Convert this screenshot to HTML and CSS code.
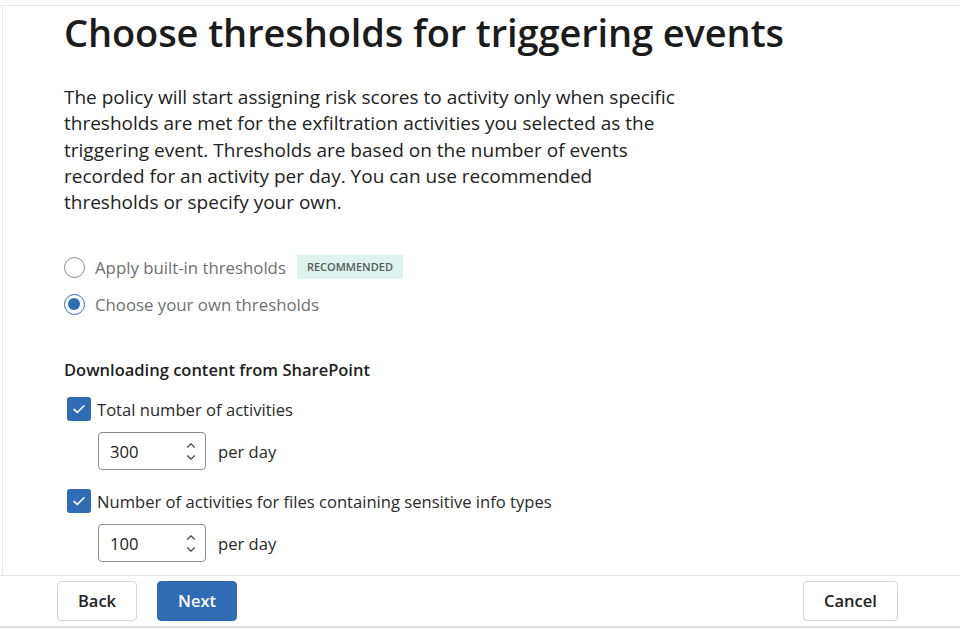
FILE: index.html
```html
<!DOCTYPE html>
<html lang="en">
<head>
<meta charset="utf-8">
<title>Choose thresholds for triggering events</title>
<link rel="stylesheet" href="styles.css">
</head>
<body>
<div class="page">
  <div class="top-gap"></div>
  <main class="content">
    <h1 class="title">Choose thresholds for triggering events</h1>
    <p class="intro">The policy will start assigning risk scores to activity only when specific thresholds are met for the exfiltration activities you selected as the triggering event. Thresholds are based on the number of events recorded for an activity per day. You can use recommended thresholds or specify your own.</p>

    <div class="radios">
      <label class="radio-row">
        <span class="radio"></span>
        <span class="radio-label muted">Apply built-in thresholds</span>
        <span class="badge">RECOMMENDED</span>
      </label>
      <label class="radio-row">
        <span class="radio checked"></span>
        <span class="radio-label muted">Choose your own thresholds</span>
      </label>
    </div>

    <h2 class="section-title">Downloading content from SharePoint</h2>

    <div class="check-row">
      <span class="checkbox"><svg width="16" height="16" viewBox="0 0 16 16"><path d="M3 8.3 L6.3 11.4 L13 4.8" fill="none" stroke="#fff" stroke-width="1.6" stroke-linecap="round" stroke-linejoin="round"/></svg></span>
      <span class="check-label">Total number of activities</span>
    </div>
    <div class="spin-row">
      <div class="spin">
        <span class="spin-value">300</span>
        <span class="spin-arrows">
          <svg width="10" height="7" viewBox="0 0 10 7"><path d="M1.5 5.2 L5 1.8 L8.5 5.2" fill="none" stroke="#444" stroke-width="1.2" stroke-linecap="round"/></svg>
          <svg width="10" height="7" viewBox="0 0 10 7"><path d="M1.5 1.8 L5 5.2 L8.5 1.8" fill="none" stroke="#444" stroke-width="1.2" stroke-linecap="round"/></svg>
        </span>
      </div>
      <span class="unit">per day</span>
    </div>

    <div class="check-row">
      <span class="checkbox"><svg width="16" height="16" viewBox="0 0 16 16"><path d="M3 8.3 L6.3 11.4 L13 4.8" fill="none" stroke="#fff" stroke-width="1.6" stroke-linecap="round" stroke-linejoin="round"/></svg></span>
      <span class="check-label">Number of activities for files containing sensitive info types</span>
    </div>
    <div class="spin-row">
      <div class="spin">
        <span class="spin-value">100</span>
        <span class="spin-arrows">
          <svg width="10" height="7" viewBox="0 0 10 7"><path d="M1.5 5.2 L5 1.8 L8.5 5.2" fill="none" stroke="#444" stroke-width="1.2" stroke-linecap="round"/></svg>
          <svg width="10" height="7" viewBox="0 0 10 7"><path d="M1.5 1.8 L5 5.2 L8.5 1.8" fill="none" stroke="#444" stroke-width="1.2" stroke-linecap="round"/></svg>
        </span>
      </div>
      <span class="unit">per day</span>
    </div>
  </main>
  <footer class="footer">
    <div class="footer-left">
      <button class="btn">Back</button>
      <button class="btn primary">Next</button>
    </div>
    <button class="btn cancel">Cancel</button>
  </footer>
</div>
</body>
</html>
```
FILE: styles.css
```css
* { box-sizing: border-box; }
html, body { margin: 0; padding: 0; background: #fff; }
body {
  font-family: "Open Sans", "Noto Sans", sans-serif;
  color: #1f1f1f;
}
.page {
  width: 960px;
  height: 629px;
  display: flex;
  flex-direction: column;
  overflow: hidden;
}
.top-gap {
  height: 6px;
  flex: none;
  border-bottom: 1px solid #e6e6e6;
}
.content {
  flex: 1;
  min-height: 0;
  overflow: hidden;
  margin-left: 2px;
  border-left: 1px solid #e6e6e6;
  padding-left: 61px;
}
.title {
  margin: 2px 0 0;
  font-size: 38px;
  line-height: 48px;
  font-weight: 600;
  letter-spacing: -0.1px;
  color: #1b1b1b;
}
.intro {
  margin: 28px 0 0;
  width: 616px;
  font-size: 19px;
  line-height: 26.3px;
  color: #222;
}
.radios {
  margin-top: 40px;
  display: flex;
  flex-direction: column;
  gap: 13px;
}
.radio-row {
  display: flex;
  align-items: center;
  height: 24px;
}
.radio {
  width: 21px;
  height: 21px;
  border-radius: 50%;
  border: 1.5px solid #8a8a8a;
  flex: none;
  position: relative;
}
.radio.checked {
  border-color: #2f6cb4;
}
.radio.checked::after {
  content: "";
  position: absolute;
  left: 3px; top: 3px;
  width: 12px; height: 12px;
  border-radius: 50%;
  background: #2f6cb4;
}
.radio-label {
  margin-left: 10px;
  font-size: 16.8px;
}
.muted { color: #707070; }
.badge {
  margin-left: 11px;
  background: #dcf3ee;
  color: #5a5a5a;
  font-size: 11px;
  font-weight: 600;
  height: 24px;
  line-height: 24px;
  padding: 0 10px;
}
.section-title {
  margin: 43px 0 0;
  font-size: 16.5px;
  line-height: 22px;
  font-weight: 600;
  color: #222;
}
.check-row {
  display: flex;
  align-items: center;
  margin-top: 16px;
  margin-left: 3px;
  height: 24px;
}
.check-row + .spin-row + .check-row { margin-top: 19px; }
.checkbox {
  width: 24px;
  height: 24px;
  background: #2f6cb4;
  border-radius: 3px;
  display: flex;
  align-items: center;
  justify-content: center;
  flex: none;
}
.check-label {
  margin-left: 6px;
  font-size: 16.6px;
  color: #2a2a2a;
}
.spin-row {
  display: flex;
  align-items: center;
  margin-top: 11px;
  margin-left: 34px;
}
.spin {
  width: 108px;
  height: 38px;
  border: 1px solid #8c8c8c;
  border-radius: 4px;
  display: flex;
  align-items: center;
  justify-content: space-between;
  padding: 0 9px 0 11px;
}
.spin-value {
  font-size: 16.6px;
  color: #222;
}
.spin-arrows {
  display: flex;
  flex-direction: column;
  gap: 5px;
}
.spin-arrows svg { display: block; }
.unit {
  margin-left: 12px;
  font-size: 16.6px;
  color: #2a2a2a;
}
.footer {
  flex: none;
  height: 53px;
  border-top: 1px solid #e6e6e6;
  border-bottom: 2px solid #e3e3e3;
  margin-bottom: 1px;
  display: flex;
  justify-content: space-between;
  align-items: flex-start;
  padding: 5px 62px 0 57px;
}
.footer-left {
  display: flex;
  gap: 20px;
}
.btn {
  font-family: "Open Sans", "Noto Sans", sans-serif;
  font-size: 16.5px;
  font-weight: 600;
  height: 40px;
  width: 80px;
  border: 1px solid #d4d4d4;
  border-radius: 4px;
  background: #fff;
  color: #222;
  padding: 0 0 2px;
}
.btn.primary {
  background: #2f6cb4;
  border-color: #2f6cb4;
  color: #fff;
}
.btn.cancel { width: 95px; }
```
